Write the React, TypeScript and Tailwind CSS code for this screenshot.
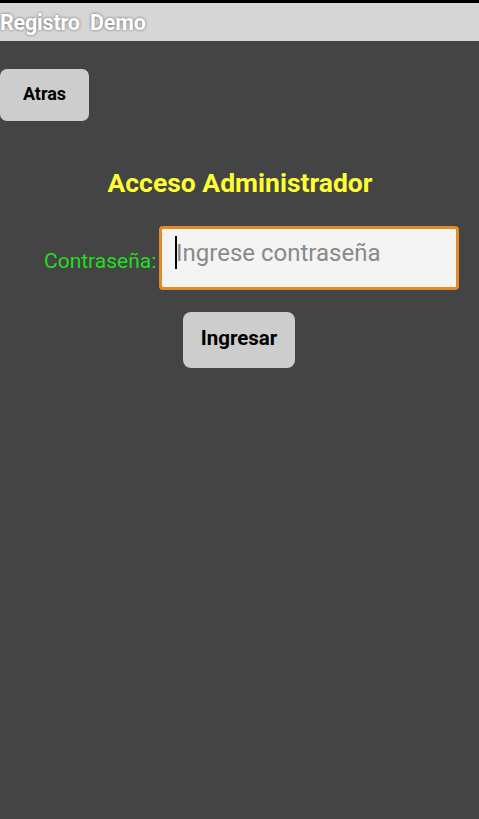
export default function App() {
  return (
    <div
      className="w-[479px] h-[819px] bg-[#444444] flex flex-col"
      style={{ fontFamily: "Roboto, 'Liberation Sans', sans-serif" }}
    >
      <div className="h-[3px] bg-black" />
      <div className="h-[38px] bg-[#d6d6d6] flex items-center">
        <span className="text-white font-bold text-[21.5px] leading-none [text-shadow:0_0_3px_rgba(0,0,0,0.55)] tracking-[-0.2px] mt-[2px]">
          Registro&nbsp; Demo
        </span>
      </div>

      <div className="mt-[28px]">
        <button className="w-[89px] h-[52px] bg-[#cdcdcd] rounded-[7px] text-black font-bold text-[18px] pb-[4px]">
          Atras
        </button>
      </div>

      <h1 className="mt-[47px] text-center text-[#ffff33] font-bold text-[26.5px] leading-[30px] pl-[1px]">
        Acceso Administrador
      </h1>

      <div className="mt-[28px] flex items-center">
        <span className="ml-[44px] w-[115px] text-[#22dd22] text-[21px] mt-[8px] whitespace-nowrap">Contraseña:</span>
        <div className="w-[300px] h-[64px] rounded-[4px] border-[3px] border-[#e08a2c] bg-[#f4f4f4] shadow-[inset_0_0_0_1px_#fff3d8] flex items-center relative">
          <span className="absolute left-[13px] top-[7px] w-[1.5px] h-[33px] bg-black" />
          <span className="ml-[14px] mb-[10px] text-[#8a8a8a] text-[24px]">Ingrese contraseña</span>
        </div>
      </div>

      <div className="mt-[22px] flex justify-center">
        <button className="ml-[-1px] w-[112px] h-[56px] bg-[#cdcdcd] rounded-[8px] text-black font-bold text-[20.5px] pb-[3px]">
          Ingresar
        </button>
      </div>
    </div>
  );
}
